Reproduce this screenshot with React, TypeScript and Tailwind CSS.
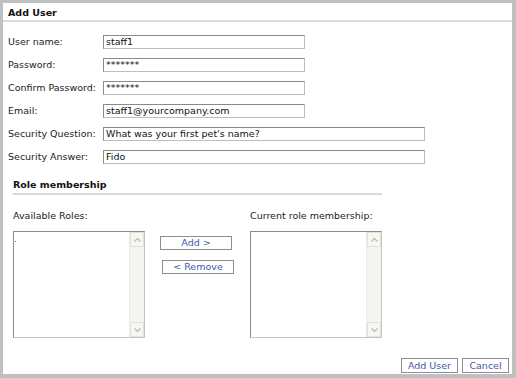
import React from "react";

const font = { fontFamily: '"DejaVu Sans", Verdana, sans-serif' };

function Field({ label, value, wide }: { label: string; value: string; wide?: boolean }) {
  return (
    <div className="flex items-center h-[14px]">
      <div className="w-[95px] text-[9.5px] text-[#222] leading-none">{label}</div>
      <div
        className={`h-[14px] ${wide ? "w-[322px]" : "w-[202px]"} border border-t-[#8a8a8a] border-l-[#8a8a8a] border-r-[#bdbdbd] border-b-[#bdbdbd] bg-white flex items-center pl-[2px] text-[9.5px] text-[#111] leading-none`}
      >
        {value}
      </div>
    </div>
  );
}

function Chevron({ up }: { up?: boolean }) {
  return (
    <svg width="9" height="6" viewBox="0 0 9 6">
      <path
        d={up ? "M1.5 4.5 L4.5 1.5 L7.5 4.5" : "M1.5 1.5 L4.5 4.5 L7.5 1.5"}
        fill="none"
        stroke="#b8b8b8"
        strokeWidth="1.2"
      />
    </svg>
  );
}

function ListBox({ dot }: { dot?: boolean }) {
  return (
    <div className="relative w-[132px] h-[107px] border border-t-[#8c8c8c] border-l-[#8c8c8c] border-r-[#c4c4c4] border-b-[#c4c4c4] bg-white flex">
      <div className="flex-1">
        {dot && <div className="ml-[1px] mt-[9px] w-[1px] h-[1px] bg-[#666]" />}
      </div>
      <div className="w-[15px] h-full bg-[#f5f4ee] border-l border-[#ecebe4] flex flex-col justify-between">
        <div className="h-[15px] border border-[#e2e1da] bg-[#f7f6f1] flex items-center justify-center">
          <Chevron up />
        </div>
        <div className="h-[15px] border border-[#e2e1da] bg-[#f7f6f1] flex items-center justify-center">
          <Chevron />
        </div>
      </div>
    </div>
  );
}

function Btn({ children, w, h = 14 }: { children: React.ReactNode; w: string; h?: number }) {
  return (
    <div
      className={`${w} ${h === 15 ? "h-[15px]" : "h-[14px]"} border border-[#8e8e8e] bg-white flex items-center justify-center text-[9.5px] text-[#3d5aa8] leading-none`}
    >
      {children}
    </div>
  );
}

export default function App() {
  return (
    <div style={font} className="w-[516px] h-[378px] bg-[#c0c0c0] pt-[3px] pl-[3px] pr-[4px] pb-[4px]">
      <div className="w-full h-full bg-white flex flex-col">
        <div className="h-[19px] border-b-2 border-[#d9d9d9] flex items-center pl-[5px] pt-[2px]">
          <span className="text-[9.5px] font-bold text-[#111] leading-none">Add User</span>
        </div>
        <div className="pl-[5px] mt-[13px] flex flex-col gap-[9px]">
          <Field label="User name:" value="staff1" />
          <Field label="Password:" value="*******" />
          <Field label="Confirm Password:" value="*******" />
          <Field label="Email:" value="staff1@yourcompany.com" />
          <Field label="Security Question:" value="What was your first pet's name?" wide />
          <Field label="Security Answer:" value="Fido" wide />
        </div>
        <div className="pl-[10px] mt-[16px]">
          <div className="w-[369px] h-[15px] border-b-2 border-[#d9d9d9] text-[9.5px] font-bold text-[#111] leading-none">
            Role membership
          </div>
          <div className="flex mt-[16px]">
            <div className="w-[147px] flex flex-col">
              <div className="h-[14px] text-[9.5px] text-[#222] leading-none">Available Roles:</div>
              <div className="mt-[6px]">
                <ListBox dot />
              </div>
            </div>
            <div className="w-[90px] pt-[25px] flex flex-col">
              <Btn w="w-[72px]">Add &gt;</Btn>
              <div className="ml-[2px] mt-[10px]">
                <Btn w="w-[72px]">&lt; Remove</Btn>
              </div>
            </div>
            <div className="flex flex-col">
              <div className="h-[14px] text-[9.5px] text-[#222] leading-none">Current role membership:</div>
              <div className="mt-[6px]">
                <ListBox />
              </div>
            </div>
          </div>
        </div>
        <div className="flex justify-end gap-[4px] pr-[3px] mt-[20px]">
          <Btn w="w-[57px]" h={15}>Add User</Btn>
          <Btn w="w-[47px]" h={15}>Cancel</Btn>
        </div>
      </div>
    </div>
  );
}
